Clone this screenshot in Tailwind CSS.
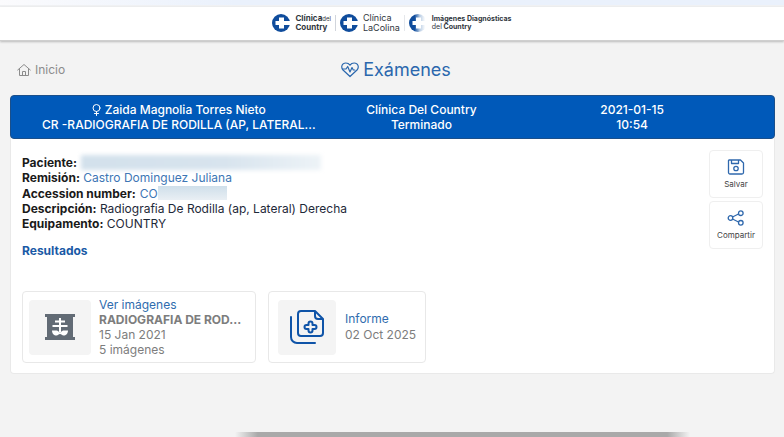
<!DOCTYPE html>
<html lang="es">
<head>
    <meta charset="UTF-8">
    <meta name="viewport" content="width=device-width, initial-scale=1.0">
    <title>Exámenes</title>
    <script src="https://cdn.jsdelivr.net/npm/@tailwindcss/browser@4"></script>
</head>
<body class="bg-[#f3f3f3] font-['Inter',sans-serif] text-xs text-gray-800 min-h-screen flex flex-col overflow-hidden">

    <!-- top strip -->
    <div class="h-[7px] bg-linear-to-r from-[#fbfbfd] to-[#eaf1fc] to-30% border-b-2 border-[#f0f1f3]"></div>

    <!-- logos -->
    <header class="h-[34px] bg-white border-b border-[#cfcfcf] shadow-[0_1px_2px_#bbbbbb] flex items-center justify-center pb-px">
        <div class="flex items-center gap-1">
            <svg class="w-[19px] h-[18px]" viewBox="0 0 19 18">
                <circle cx="9" cy="9" r="9" fill="#0f4c9c"/>
                <path d="M7 3.500h5V7h7v4h-7v3.500H7V11H3.500V7H7z" fill="#fff"/>
            </svg>
            <div class="text-[8px] leading-[9px] font-bold text-[#30363d] whitespace-nowrap">
                <div>Clínica<span class="text-[6px] leading-none font-normal">del</span></div>
                <div>Country</div>
            </div>
        </div>
        <div class="w-px h-4 bg-gray-300 mx-1"></div>
        <div class="flex items-center gap-1">
            <svg class="w-[19px] h-[18px]" viewBox="0 0 19 18">
                <circle cx="9" cy="9" r="9" fill="#0f4c9c"/>
                <path d="M7 3.500h5V7h7v4h-7v3.500H7V11H3.500V7H7z" fill="#fff"/>
            </svg>
            <div class="text-[9px] leading-[10px] text-[#30363d] whitespace-nowrap">
                <div>Clínica</div>
                <div>LaColina</div>
            </div>
        </div>
        <div class="w-px h-4 bg-gray-200 mx-1"></div>
        <div class="flex items-center gap-1">
            <svg class="w-[19px] h-[18px]" viewBox="0 0 19 18">
                <defs>
                    <linearGradient id="fade">
                        <stop offset=".3" stop-color="#0f4c9c"/>
                        <stop offset=".6" stop-color="#b9cde4"/>
                        <stop offset=".9" stop-color="#ffffff"/>
                    </linearGradient>
                </defs>
                <circle cx="9" cy="9" r="9" fill="url(#fade)"/>
                <path d="M7 3.500h5V7h7v4h-7v3.500H7V11H3.500V7H7z" fill="#fff"/>
            </svg>
            <div class="text-[7px] leading-[8px] font-bold text-[#30363d] whitespace-nowrap">
                <div>Imágenes Diagnósticas</div>
                <div><span class="font-normal">del</span> Country</div>
            </div>
        </div>
    </header>

    <!-- page title -->
    <div class="grid grid-cols-[1fr_auto_1fr] items-center h-[54px] pt-[3px] pl-[17px] pr-[9px]">
        <a href="#" class="flex items-center gap-1 text-xs text-[#8c8c8c]">
            <svg class="w-[14px] h-[14px]" viewBox="0 0 14 14" fill="none" stroke="#8c8c8c" stroke-linecap="round" stroke-linejoin="round">
                <path d="M.7 7 7 1.500 13.300 7M2.500 6v6.500h9V6M5.500 12.500V8.500h3v4"/>
            </svg>
            Inicio
        </a>
        <h1 class="flex items-center gap-1 text-lg text-[#2a67ad]">
            <svg class="w-[18px] h-[16px]" viewBox="0 0 18 16" fill="none" stroke="#2a67ad" stroke-width="1.200" stroke-linecap="round" stroke-linejoin="round">
                <path d="M9 14.500 2 8C-.5 5 1 1 4.800 1 6.800 1 8.200 2 9 3.200 9.800 2 11.200 1 13.200 1 17 1 18.500 5 16 8Z"/>
                <path d="M1.500 7H5l1.700-2.500L9 10l2-4.500L12.300 8h1.500"/>
            </svg>
            Exámenes
        </h1>
    </div>

    <!-- exam card -->
    <main class="ml-[10px] mr-[9px] bg-white border border-[#e9e9e9] border-t-0 rounded-sm">
        <div class="grid grid-cols-[316fr_170fr_252fr] h-[44px] -mx-px pl-[10px] pr-4 items-center text-center text-xs leading-[15px] font-medium text-white bg-[#0059b9] border border-[#1b4f8a] rounded-sm">
            <div>
                <div class="flex items-center justify-center gap-1">
                    <svg class="w-[9px] h-[12px]" viewBox="0 0 9 12" fill="none" stroke="#fff" stroke-linecap="round">
                        <circle cx="4.500" cy="4" r="3.500"/>
                        <path d="M4.500 7.500v4M2.500 9.500h4"/>
                    </svg>
                    Zaida Magnolia Torres Nieto
                </div>
                <div>CR -RADIOGRAFIA DE RODILLA (AP, LATERAL...</div>
            </div>
            <div>Clínica Del Country<br>Terminado</div>
            <div>2021-01-15<br>10:54</div>
        </div>

        <div class="flex justify-between px-[11px] pt-[11px]">
            <div class="pt-1 leading-[15px]">
                <div class="flex items-center h-4">
                    <b class="text-[#1a1a1a]">Paciente:</b>
                    <span class="w-[240px] h-[15px] ml-1 bg-linear-to-r from-[#d3e1ec] via-[#d8e4ee] via-60% to-[#edf3f7] blur-[2px]"></span>
                </div>
                <div><b class="text-[#1a1a1a]">Remisión:</b> <span class="text-[#3d76b5]">Castro Dominguez Juliana</span></div>
                <div class="flex items-center h-4">
                    <b class="text-[#1a1a1a]">Accession number:</b>
                    <span class="ml-1 text-[#3d76b5]">CO</span>
                    <span class="w-[69px] h-[14px] bg-linear-to-b from-[#cfdfea] to-[#e9eff4]"></span>
                </div>
                <div><b class="text-[#1a1a1a]">Descripción:</b> Radiografia De Rodilla (ap, Lateral) Derecha</div>
                <div><b class="text-[#1a1a1a]">Equipamento:</b> COUNTRY</div>
                <h2 class="mt-3 font-bold text-[#1a5aa6]">Resultados</h2>
            </div>
            <div class="flex flex-col gap-[3px]">
                <button class="w-[54px] h-[48px] flex flex-col items-center justify-center gap-1 border border-[#efefef] rounded-sm text-[8px] leading-[10px] text-[#444444]">
                    <svg class="w-[18px] h-[16px]" viewBox="0 0 18 16" fill="none" stroke="#2f68ad" stroke-width="1.300" stroke-linejoin="round">
                        <path d="M2 1h11.500L16.500 4v9.500a1.500 1.500 0 0 1-1.500 1.500H3a1.500 1.500 0 0 1-1.500-1.500V1.500zM4.500 1v3.500h7V1"/>
                        <circle cx="9" cy="9.500" r="2.200"/>
                    </svg>
                    Salvar
                </button>
                <button class="w-[54px] h-[48px] flex flex-col items-center justify-center gap-1 border border-[#efefef] rounded-sm text-[8px] leading-[10px] text-[#444444]">
                    <svg class="w-[18px] h-[16px]" viewBox="0 0 18 16" fill="none" stroke="#2f68ad" stroke-width="1.300">
                        <path d="M5.500 7 11.500 4M5.500 9l6 3"/>
                        <circle cx="3.500" cy="8" r="2.300"/>
                        <circle cx="13.800" cy="3.200" r="2.300"/>
                        <circle cx="13.800" cy="12.800" r="2.300"/>
                    </svg>
                    Compartir
                </button>
            </div>
        </div>

        <div class="flex gap-3 px-[11px] pt-[33px] pb-[10px]">
            <a href="#" class="w-[234px] h-[72px] flex items-center gap-2 px-[6px] border border-[#e8e8e8] rounded-sm text-[#7d7d7d]">
                <span class="w-[62px] h-[55px] shrink-0 flex items-center justify-center bg-[#f4f4f4] rounded-sm">
                    <svg class="w-[32px] h-[26px]" viewBox="0 0 32 26">
                        <path d="M1 0h30v3h-2v20h2v3H1v-3h2V3H1z" fill="#626b75"/>
                        <path d="M16 4v14M11 7.500h10M8.500 12h15" stroke="#fff" stroke-width="2" fill="none"/>
                        <path d="M8 16.500h5l3 2 3-2h5c0 3-2 5-4.500 5-1.500 0-2-1.500-3.500-1.500s-2 1.500-3.500 1.500C10 21.500 8 19.500 8 16.500z" fill="#fff"/>
                    </svg>
                </span>
                <span class="min-w-0 leading-[15px]">
                    <span class="block text-[#2f6cae]">Ver imágenes</span>
                    <span class="block font-bold whitespace-nowrap">RADIOGRAFIA DE ROD...</span>
                    <span class="block">15 Jan 2021</span>
                    <span class="block">5 imágenes</span>
                </span>
            </a>
            <a href="#" class="w-[158px] h-[72px] flex items-center gap-[9px] px-[9px] border border-[#e8e8e8] rounded-sm text-[#7d7d7d]">
                <span class="w-[58px] h-[55px] shrink-0 flex items-center justify-center bg-[#f4f4f4] rounded-sm">
                    <svg class="w-[36px] h-[36px]" viewBox="0 0 36 36" fill="none" stroke="#0f54a8" stroke-width="2" stroke-linecap="round" stroke-linejoin="round">
                        <path d="M26 2H12a3 3 0 0 0-3 3v19a3 3 0 0 0 3 3h19a3 3 0 0 0 3-3V10zM26 2v5a3 3 0 0 0 3 3h5"/>
                        <path d="M2 8v20a6 6 0 0 0 6 6h18"/>
                        <path d="M19.500 16v-1.500a2 2 0 0 1 4 0V16H25.500a2 2 0 0 1 0 4H23.500v1.500a2 2 0 0 1-4 0V20H17.500a2 2 0 0 1 0-4z"/>
                    </svg>
                </span>
                <span class="leading-4 whitespace-nowrap">
                    <span class="block text-[#2f6cae]">Informe</span>
                    <span class="block">02 Oct 2025</span>
                </span>
            </a>
        </div>
    </main>

    <!-- bottom edge of the screen -->
    <div class="mt-auto w-[58%] ml-[30%] h-[5px] bg-[linear-gradient(to_right,transparent,#a9a9a9_5%,#a9a9a9_95%,transparent)]"></div>
</body>
</html>
